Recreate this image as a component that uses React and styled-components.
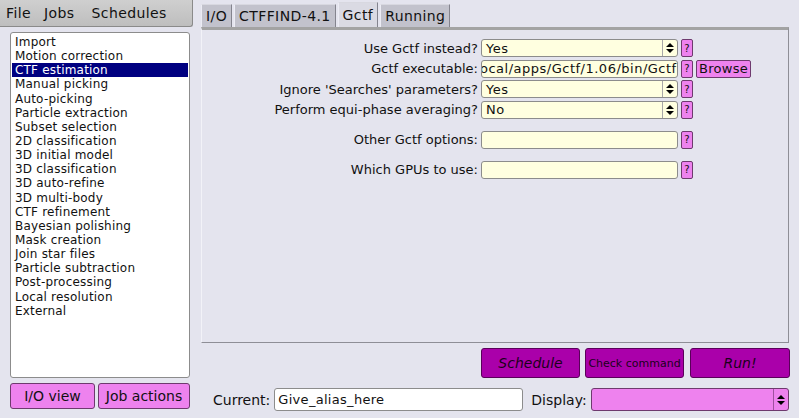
import React from 'react'
import styled, { createGlobalStyle } from 'styled-components'

const GlobalStyle = createGlobalStyle`
    html, body {
        margin: 0;
        padding: 0;
        background: #e4e4ee;
    }
    body {
        font-family: "DejaVu Sans", "Liberation Sans", sans-serif;
        font-size: 12px;
        color: #111;
    }
`

const JOBS = [
    'Import', 'Motion correction', 'CTF estimation', 'Manual picking', 'Auto-picking',
    'Particle extraction', 'Subset selection', '2D classification', '3D initial model',
    '3D classification', '3D auto-refine', '3D multi-body', 'CTF refinement',
    'Bayesian polishing', 'Mask creation', 'Join star files', 'Particle subtraction',
    'Post-processing', 'Local resolution', 'External',
]

const TABS = ['I/O', 'CTFFIND-4.1', 'Gctf', 'Running']

const Arrows = () => (
    <svg width="8" height="10" viewBox="0 0 8 10">
        <path d="M4 0 L8 4 L0 4 Z M0 6 L8 6 L4 10 Z" fill="#000" />
    </svg>
)

const App = () => {
    return (
        <Page>
            <GlobalStyle />
            <LeftColumn>
                <MenuBar>
                    <MenuItem>File</MenuItem>
                    <MenuItem>Jobs</MenuItem>
                    <MenuItem>Schedules</MenuItem>
                </MenuBar>
                <JobList>
                    {JOBS.map(j => (
                        <JobRow key={j} $selected={j === 'CTF estimation'}>{j}</JobRow>
                    ))}
                </JobList>
                <LeftButtons>
                    <PinkButton $w={85}>I/O view</PinkButton>
                    <PinkButton $w={92}>Job actions</PinkButton>
                </LeftButtons>
            </LeftColumn>

            <RightColumn>
                <TabBar>
                    {TABS.map(t => (
                        <Tab key={t} $active={t === 'Gctf'}>{t}</Tab>
                    ))}
                </TabBar>
                <Panel>
                    <FormRow>
                        <Label>Use Gctf instead?</Label>
                        <Choice><span>Yes</span><ArrowBox><Arrows /></ArrowBox></Choice>
                        <Help>?</Help>
                    </FormRow>
                    <FormRow>
                        <Label>Gctf executable:</Label>
                        <TextBox $scrolled>ocal/apps/Gctf/1.06/bin/Gctf</TextBox>
                        <Help>?</Help>
                        <BrowseButton>Browse</BrowseButton>
                    </FormRow>
                    <FormRow>
                        <Label>Ignore 'Searches' parameters?</Label>
                        <Choice><span>Yes</span><ArrowBox><Arrows /></ArrowBox></Choice>
                        <Help>?</Help>
                    </FormRow>
                    <FormRow>
                        <Label>Perform equi-phase averaging?</Label>
                        <Choice><span>No</span><ArrowBox><Arrows /></ArrowBox></Choice>
                        <Help>?</Help>
                    </FormRow>
                    <FormRow $top={12}>
                        <Label>Other Gctf options:</Label>
                        <TextBox />
                        <Help>?</Help>
                    </FormRow>
                    <FormRow $top={12}>
                        <Label>Which GPUs to use:</Label>
                        <TextBox />
                        <Help>?</Help>
                    </FormRow>
                </Panel>
                <ActionBar>
                    <RunButton $italic $size={14}>Schedule</RunButton>
                    <RunButton $size={11}>Check command</RunButton>
                    <RunButton $italic $size={14}>Run!</RunButton>
                </ActionBar>
                <StatusBar>
                    <StatusLabel>Current:</StatusLabel>
                    <AliasInput>Give_alias_here</AliasInput>
                    <StatusLabel>Display:</StatusLabel>
                    <DisplayChoice><ArrowBox $pink><Arrows /></ArrowBox></DisplayChoice>
                </StatusBar>
            </RightColumn>
        </Page>
    )
}

export default App


const Page = styled.div`
    display: flex;
    width: 799px;
    height: 418px;
    overflow: hidden;
    background: #e4e4ee;
`

const LeftColumn = styled.div`
    width: 193px;
    display: flex;
    flex-direction: column;
`

const MenuBar = styled.div`
    height: 26px;
    display: flex;
    align-items: center;
    gap: 13px;
    padding-left: 6px;
    background: linear-gradient(#cfcfcf, #bebebe);
    border-right: 1px solid #8a8a8a;
    border-bottom: 1px solid #8a8a8a;
    border-bottom-right-radius: 3px;
    font-size: 14px;
    letter-spacing: 0.4px;
`

const MenuItem = styled.span`
    &:last-child {
        margin-left: 4px;
    }
`

const JobList = styled.div`
    margin: 5px 3px 0 10px;
    height: 346px;
    background: #fff;
    border: 1px solid #8c8c8c;
    border-radius: 3px;
    padding: 2px 1px;
    box-sizing: border-box;
    line-height: 14.15px;
    letter-spacing: 0.2px;
`

const JobRow = styled.div`
    padding-left: 3px;
    height: 14.15px;
    white-space: nowrap;
    background: ${p => p.$selected ? '#000080' : 'transparent'};
    color: ${p => p.$selected ? '#fff' : '#111'};
`

const LeftButtons = styled.div`
    display: flex;
    gap: 3px;
    margin: 5px 0 0 10px;
`

const PinkButton = styled.div`
    width: ${p => p.$w}px;
    height: 26px;
    box-sizing: border-box;
    display: flex;
    align-items: center;
    justify-content: center;
    background: #ee82ee;
    border: 1px solid #6e3a6e;
    border-radius: 3px;
    font-size: 14px;
`

const RightColumn = styled.div`
    flex: 1;
    display: flex;
    flex-direction: column;
    padding-left: 8px;
`

const TabBar = styled.div`
    display: flex;
    align-items: flex-end;
    height: 27px;
    gap: 2px;
`

const Tab = styled.div`
    height: ${p => p.$active ? 25 : 23}px;
    box-sizing: border-box;
    padding: 0 4px;
    display: flex;
    align-items: center;
    font-size: 14px;
    letter-spacing: 0.4px;
    background: ${p => p.$active ? '#dadae3' : '#c2c2cc'};
    border: 1px solid #9c9ca6;
    border-bottom: none;
    border-top-color: #d8d8e0;
    border-left-color: #ececf4;
    border-right-color: #84848e;
`

const Panel = styled.div`
    width: 588px;
    height: 316px;
    box-sizing: border-box;
    border-top: 3px solid #a3a3a3;
    border-left: 1px solid #f2f2f8;
    border-right: 1px solid #8e8e96;
    border-bottom: 1px solid #8e8e96;
    padding-top: 9px;
`

const FormRow = styled.div`
    display: flex;
    align-items: center;
    height: 18px;
    margin-top: ${p => p.$top ?? 2.67}px;
    &:first-child {
        margin-top: 0;
    }
`

const Label = styled.div`
    width: 276px;
    text-align: right;
    padding-right: 3px;
    white-space: nowrap;
    font-size: 13px;
`

const inputBase = `
    width: 197px;
    height: 18px;
    box-sizing: border-box;
    background: #ffffe0;
    border: 1px solid #8c8c8c;
    border-radius: 3px;
    display: flex;
    align-items: center;
    overflow: hidden;
    white-space: nowrap;
    font-size: 13px;
    letter-spacing: 0.5px;
`

const Choice = styled.div`
    ${inputBase}
    justify-content: space-between;
    padding-left: 4px;
`

const ArrowBox = styled.div`
    width: 14px;
    height: 100%;
    display: flex;
    align-items: center;
    justify-content: center;
    border-left: 1px solid ${p => p.$pink ? '#a050a0' : '#a8a8a8'};
`

const TextBox = styled.div`
    ${inputBase}
    padding-left: ${p => p.$scrolled ? 0 : 3}px;
    text-indent: ${p => p.$scrolled ? -2 : 0}px;
`

const Help = styled.div`
    width: 12px;
    height: 18px;
    box-sizing: border-box;
    margin-left: 3px;
    background: #ee82ee;
    border: 1px solid #6e3a6e;
    border-radius: 2px;
    font-size: 10px;
    display: flex;
    align-items: center;
    justify-content: center;
`

const BrowseButton = styled.div`
    margin-left: 3px;
    width: 55px;
    height: 18px;
    box-sizing: border-box;
    background: #ee82ee;
    border: 1px solid #6e3a6e;
    border-radius: 2px;
    display: flex;
    align-items: center;
    justify-content: center;
    font-size: 13px;
    letter-spacing: 0.3px;
`

const ActionBar = styled.div`
    display: flex;
    gap: 5px;
    margin: 5px 0 0 280px;
`

const RunButton = styled.div`
    width: 99px;
    height: 30px;
    box-sizing: border-box;
    background: #aa00aa;
    border: 1px solid #5a005a;
    border-radius: 3px;
    display: flex;
    align-items: center;
    justify-content: center;
    font-style: ${p => p.$italic ? 'italic' : 'normal'};
    font-size: ${p => p.$size}px;
    color: #1a001a;
    white-space: nowrap;
    &:last-child {
        width: 100px;
        margin-left: 1px;
    }
`

const StatusBar = styled.div`
    display: flex;
    align-items: center;
    margin-top: 10px;
    padding-left: 12px;
`

const StatusLabel = styled.div`
    font-size: 14px;
    padding-right: 4px;
`

const AliasInput = styled.div`
    width: 249px;
    height: 23px;
    box-sizing: border-box;
    margin-right: 8px;
    background: #fff;
    border: 1px solid #8c8c8c;
    border-radius: 3px;
    padding-left: 3px;
    font-size: 13px;
    letter-spacing: 0.3px;
    display: flex;
    align-items: center;
`

const DisplayChoice = styled.div`
    width: 198px;
    height: 23px;
    box-sizing: border-box;
    background: #ee82ee;
    border: 1px solid #6e3a6e;
    border-radius: 3px;
    display: flex;
    justify-content: flex-end;
`
